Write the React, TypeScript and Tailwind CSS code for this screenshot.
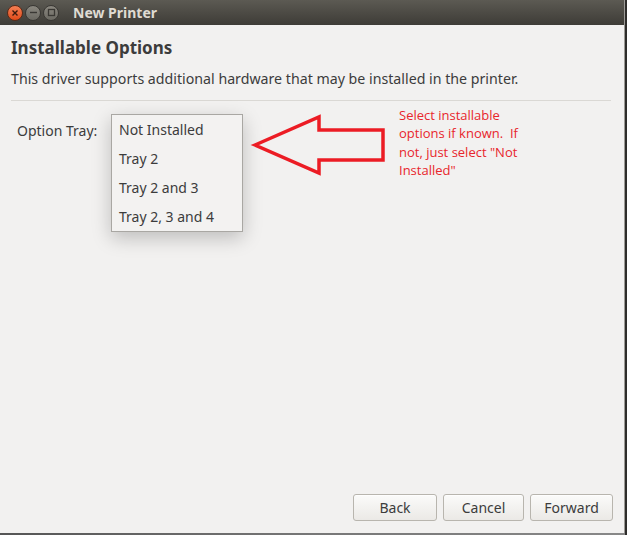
import React from 'react';

const font = { fontFamily: '"Noto Sans", "Open Sans", sans-serif' };

function WindowButton({ kind }: { kind: 'close' | 'min' | 'max' }) {
  if (kind === 'close') {
    return (
      <div className="w-[16px] h-[16px] rounded-full bg-gradient-to-b from-[#f47e52] to-[#df4a16] border border-[#5a2a18] flex items-center justify-center">
        <svg width="8" height="8" viewBox="0 0 8 8">
          <path d="M1.5 1.5 L6.5 6.5 M6.5 1.5 L1.5 6.5" stroke="#3a1a0c" strokeWidth="1.4" />
        </svg>
      </div>
    );
  }
  return (
    <div className="w-[16px] h-[16px] rounded-full bg-gradient-to-b from-[#8a877f] to-[#6b6962] border border-[#3a3834] flex items-center justify-center">
      <svg width="9" height="9" viewBox="0 0 9 9">
        {kind === 'min' ? (
          <path d="M1 4.5 L8 4.5" stroke="#3a3834" strokeWidth="1.4" />
        ) : (
          <rect x="1.5" y="1.5" width="6" height="6" fill="none" stroke="#3a3834" strokeWidth="1.3" />
        )}
      </svg>
    </div>
  );
}

function DialogButton({ label, width }: { label: string; width: string }) {
  return (
    <button
      className={`${width} h-[27px] rounded-[3px] border border-[#b8b5ae] bg-gradient-to-b from-[#fbfbfa] to-[#ebe9e6] text-[14px] text-[#3c3c3c] shadow-[0_1px_0_rgba(255,255,255,0.8)_inset]`}
    >
      {label}
    </button>
  );
}

const trayOptions = ['Not Installed', 'Tray 2', 'Tray 2 and 3', 'Tray 2, 3 and 4'];

export default function App() {
  return (
    <div className="w-[627px] h-[535px] bg-[#2e2d2b] overflow-hidden" style={font}>
      <div className="w-[625px] h-[533px] flex flex-col bg-[#f2f1f0] border-r border-[#9d9b97] relative">
        {/* title bar */}
        <div className="h-[25px] shrink-0 bg-gradient-to-b from-[#5c5a53] to-[#3e3c37] flex items-center pl-[7px]">
          <div className="flex items-center gap-[2px]">
            <WindowButton kind="close" />
            <WindowButton kind="min" />
            <WindowButton kind="max" />
          </div>
          <span className="ml-[14px] text-[14px] font-bold text-[#dfdbd2]">New Printer</span>
        </div>

        {/* body */}
        <div className="flex-1 flex flex-col px-[11px]">
          <h1 className="mt-[11px] text-[17px] font-bold text-[#3c3c3c] leading-[24px]">Installable Options</h1>
          <p className="mt-[9px] text-[14.2px] text-[#3c3c3c] leading-[20px]">
            This driver supports additional hardware that may be installed in the printer.
          </p>
          <div className="mt-[11px] mr-[2px] h-px bg-[#dad8d4]" />

          <div className="mt-[20px] pl-[6px] text-[14px] text-[#3c3c3c] leading-[20px]">Option Tray:</div>

          <div className="flex-1" />

          <div className="flex justify-end gap-[6px] mb-[12px]">
            <DialogButton label="Back" width="w-[84px]" />
            <DialogButton label="Cancel" width="w-[81px]" />
            <DialogButton label="Forward" width="w-[83px]" />
          </div>
        </div>

        {/* dropdown menu */}
        <div className="absolute left-[111px] top-[114px] w-[132px] bg-[#f3f2f1] border border-[#a9a7a3] shadow-[0_6px_18px_rgba(0,0,0,0.22)]">
          {trayOptions.map((opt) => (
            <div key={opt} className="h-[29px] pl-[7px] flex items-center text-[14px] text-[#3c3c3c]">
              {opt}
            </div>
          ))}
        </div>

        {/* red arrow annotation */}
        <svg className="absolute left-[250px] top-[111px]" width="142" height="70" viewBox="0 0 142 70">
          <path
            d="M5 34 L69 6 L69 19 L133 19 L133 49 L69 49 L69 62 Z"
            fill="none"
            stroke="#ec1c24"
            strokeWidth="3.5"
            strokeLinejoin="miter"
          />
        </svg>
        <div
          className="absolute left-[399px] top-[106px] w-[150px] text-[13px] leading-[18.4px] text-[#e8262c]"
          style={{ fontFamily: '"Open Sans", "Liberation Sans", sans-serif' }}
        >
          Select installable
          <br />
          options if known.&nbsp; If
          <br />
          not, just select "Not
          <br />
          Installed"
        </div>
      </div>
      <div className="w-[625px] h-[2px] bg-gradient-to-r from-[#555] via-[#777] to-[#888]" />
    </div>
  );
}
